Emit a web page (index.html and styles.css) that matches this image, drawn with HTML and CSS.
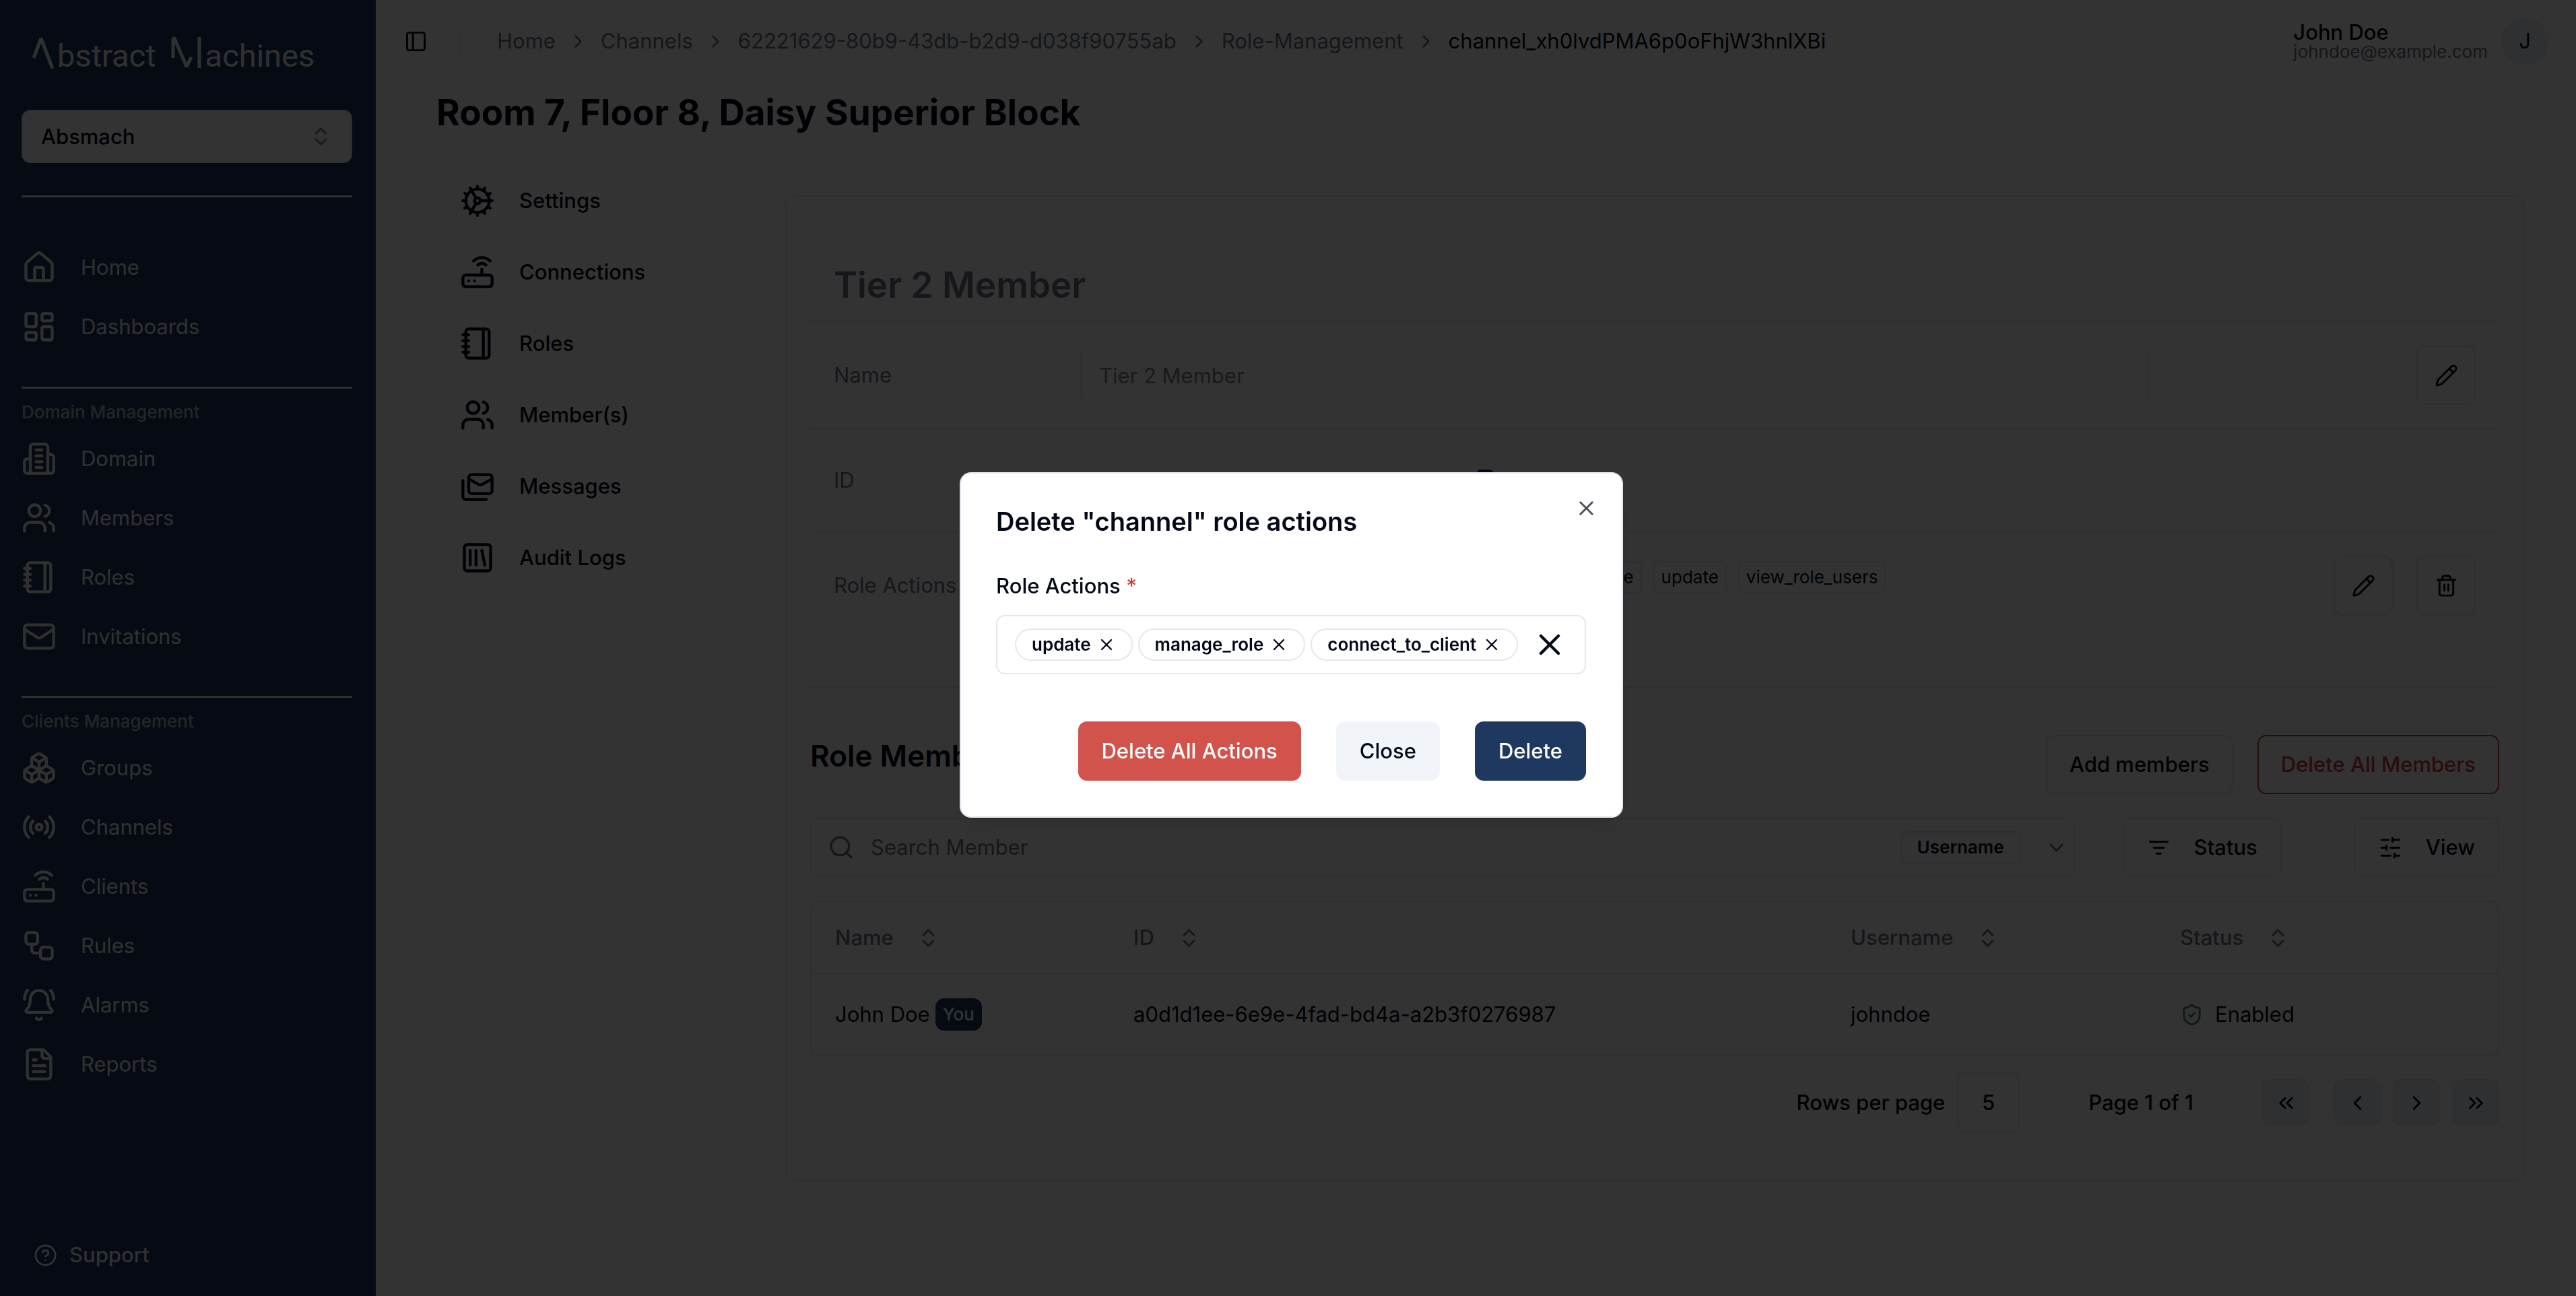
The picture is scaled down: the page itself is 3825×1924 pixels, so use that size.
FILE: index.html
```html
<!DOCTYPE html>
<html lang="en">
<head>
<meta charset="utf-8">
<title>Delete role actions</title>
<link rel="stylesheet" href="styles.css">
</head>
<body>
<svg width="0" height="0" class="sprite" aria-hidden="true">
  <symbol id="i-house" viewBox="0 0 24 24"><path d="M15 21v-8a1 1 0 0 0-1-1h-4a1 1 0 0 0-1 1v8"/><path d="M3 10a2 2 0 0 1 .709-1.528l7-5.999a2 2 0 0 1 2.582 0l7 5.999A2 2 0 0 1 21 10v9a2 2 0 0 1-2 2H5a2 2 0 0 1-2-2z"/></symbol>
  <symbol id="i-dash" viewBox="0 0 24 24"><rect width="7" height="9" x="3" y="3" rx="1"/><rect width="7" height="5" x="14" y="3" rx="1"/><rect width="7" height="9" x="14" y="12" rx="1"/><rect width="7" height="5" x="3" y="16" rx="1"/></symbol>
  <symbol id="i-building" viewBox="0 0 24 24"><path d="M6 22V4a2 2 0 0 1 2-2h8a2 2 0 0 1 2 2v18Z"/><path d="M6 12H4a2 2 0 0 0-2 2v6a2 2 0 0 0 2 2h2"/><path d="M18 9h2a2 2 0 0 1 2 2v9a2 2 0 0 1-2 2h-2"/><path d="M10 6h4"/><path d="M10 10h4"/><path d="M10 14h4"/><path d="M10 18h4"/></symbol>
  <symbol id="i-users" viewBox="0 0 24 24"><path d="M16 21v-2a4 4 0 0 0-4-4H6a4 4 0 0 0-4 4v2"/><circle cx="9" cy="7" r="4"/><path d="M22 21v-2a4 4 0 0 0-3-3.87"/><path d="M16 3.13a4 4 0 0 1 0 7.75"/></symbol>
  <symbol id="i-notebook" viewBox="0 0 24 24"><path d="M2 6h4"/><path d="M2 10h4"/><path d="M2 14h4"/><path d="M2 18h4"/><rect width="16" height="20" x="4" y="2" rx="2"/><path d="M16 2v20"/></symbol>
  <symbol id="i-mail" viewBox="0 0 24 24"><rect width="20" height="16" x="2" y="4" rx="2"/><path d="m22 7-8.97 5.7a1.94 1.94 0 0 1-2.06 0L2 7"/></symbol>
  <symbol id="i-boxes" viewBox="0 0 24 24"><path d="M2.97 12.92A2 2 0 0 0 2 14.63v3.24a2 2 0 0 0 .97 1.71l3 1.8a2 2 0 0 0 2.06 0L12 19v-5.5l-5-3-4.03 2.42Z"/><path d="m7 16.5-4.74-2.85"/><path d="m7 16.5 5-3"/><path d="M7 16.5v5.17"/><path d="M12 13.5V19l3.97 2.38a2 2 0 0 0 2.06 0l3-1.8a2 2 0 0 0 .97-1.71v-3.24a2 2 0 0 0-.97-1.71L17 10.5l-5 3Z"/><path d="m17 16.5-5-3"/><path d="m17 16.5 4.74-2.85"/><path d="M17 16.5v5.17"/><path d="M7.97 4.42A2 2 0 0 0 7 6.13v4.37l5 3 5-3V6.13a2 2 0 0 0-.97-1.71l-3-1.8a2 2 0 0 0-2.06 0l-3 1.8Z"/><path d="M12 8 7.26 5.15"/><path d="m12 8 4.74-2.85"/><path d="M12 13.5V8"/></symbol>
  <symbol id="i-radio" viewBox="0 0 24 24"><path d="M4.9 19.1C1 15.2 1 8.8 4.9 4.9"/><path d="M7.8 16.2c-2.3-2.3-2.3-6.1 0-8.5"/><circle cx="12" cy="12" r="2"/><path d="M16.2 7.8c2.3 2.3 2.3 6.1 0 8.5"/><path d="M19.1 4.9C23 8.8 23 15.1 19.1 19"/></symbol>
  <symbol id="i-router" viewBox="0 0 24 24"><rect width="20" height="8" x="2" y="14" rx="2"/><path d="M6.01 18H6"/><path d="M10.01 18H10"/><path d="M15 10v4"/><path d="M17.84 7.17a4 4 0 0 0-5.66 0"/><path d="M20.66 4.34a8 8 0 0 0-11.31 0"/></symbol>
  <symbol id="i-workflow" viewBox="0 0 24 24"><rect width="8" height="8" x="3" y="3" rx="2"/><path d="M7 11v4a2 2 0 0 0 2 2h4"/><rect width="8" height="8" x="13" y="13" rx="2"/></symbol>
  <symbol id="i-bell" viewBox="0 0 24 24"><path d="M10.268 21a2 2 0 0 0 3.464 0"/><path d="M22 8c0-2.3-.8-4.3-2-6"/><path d="M3.262 15.326A1 1 0 0 0 4 17h16a1 1 0 0 0 .74-1.673C19.41 13.956 18 12.499 18 8A6 6 0 0 0 6 8c0 4.499-1.411 5.956-2.738 7.326"/><path d="M4 2C2.8 3.7 2 5.7 2 8"/></symbol>
  <symbol id="i-file" viewBox="0 0 24 24"><path d="M15 2H6a2 2 0 0 0-2 2v16a2 2 0 0 0 2 2h12a2 2 0 0 0 2-2V7Z"/><path d="M14 2v4a2 2 0 0 0 2 2h4"/><path d="M10 9H8"/><path d="M16 13H8"/><path d="M16 17H8"/></symbol>
  <symbol id="i-help" viewBox="0 0 24 24"><circle cx="12" cy="12" r="10"/><path d="M9.09 9a3 3 0 0 1 5.83 1c0 2-3 3-3 3"/><path d="M12 17h.01"/></symbol>
  <symbol id="i-updown" viewBox="0 0 24 24"><path d="m7 15 5 5 5-5"/><path d="m7 9 5-5 5 5"/></symbol>
  <symbol id="i-panel" viewBox="0 0 24 24"><rect width="18" height="18" x="3" y="3" rx="2"/><path d="M9 3v18"/></symbol>
  <symbol id="i-right" viewBox="0 0 24 24"><path d="m9 18 6-6-6-6"/></symbol>
  <symbol id="i-left" viewBox="0 0 24 24"><path d="m15 18-6-6 6-6"/></symbol>
  <symbol id="i-down" viewBox="0 0 24 24"><path d="m6 9 6 6 6-6"/></symbol>
  <symbol id="i-first" viewBox="0 0 24 24"><path d="m11 17-5-5 5-5"/><path d="m18 17-5-5 5-5"/></symbol>
  <symbol id="i-last" viewBox="0 0 24 24"><path d="m6 17 5-5-5-5"/><path d="m13 17 5-5-5-5"/></symbol>
  <symbol id="i-cog" viewBox="0 0 24 24"><path d="M12 20a8 8 0 1 0 0-16 8 8 0 0 0 0 16Z"/><path d="M12 14a2 2 0 1 0 0-4 2 2 0 0 0 0 4Z"/><path d="M12 2v2"/><path d="M12 22v-2"/><path d="m17 20.66-1-1.73"/><path d="M11 10.27 7 3.34"/><path d="m20.66 17-1.73-1"/><path d="m3.34 7 1.73 1"/><path d="M14 12h8"/><path d="M2 12h2"/><path d="m20.66 7-1.73 1"/><path d="m3.34 17 1.73-1"/><path d="m17 3.34-1 1.73"/><path d="m11 13.73-4 6.93"/></symbol>
  <symbol id="i-mails" viewBox="0 0 24 24"><rect width="16" height="13" x="6" y="4" rx="2"/><path d="m22 7-7.1 3.78c-.57.3-1.23.3-1.8 0L6 7"/><path d="M2 8v11c0 1.1.9 2 2 2h14"/></symbol>
  <symbol id="i-library" viewBox="0 0 24 24"><rect width="18" height="18" x="3" y="3" rx="2"/><path d="M7 7v10"/><path d="M11 7v10"/><path d="m15 7 2 10"/></symbol>
  <symbol id="i-pencil" viewBox="0 0 24 24"><path d="M21.174 6.812a1 1 0 0 0-3.986-3.987L3.842 16.174a2 2 0 0 0-.5.83l-1.321 4.352a.5.5 0 0 0 .623.622l4.353-1.32a2 2 0 0 0 .83-.497z"/><path d="m15 5 4 4"/></symbol>
  <symbol id="i-trash" viewBox="0 0 24 24"><path d="M3 6h18"/><path d="M19 6v14c0 1-1 2-2 2H7c-1 0-2-1-2-2V6"/><path d="M8 6V4c0-1 1-2 2-2h4c1 0 2 1 2 2v2"/><path d="M10 11v6"/><path d="M14 11v6"/></symbol>
  <symbol id="i-copy" viewBox="0 0 24 24"><rect width="14" height="14" x="8" y="8" rx="2"/><path d="M4 16c-1.100 0-2-.9-2-2V4c0-1.100.9-2 2-2h10c1.100 0 2 .9 2 2"/></symbol>
  <symbol id="i-search" viewBox="0 0 24 24"><circle cx="11" cy="11" r="8"/><path d="m21 21-4.300-4.300"/></symbol>
  <symbol id="i-filter" viewBox="0 0 24 24"><path d="M3 6h18"/><path d="M7 12h10"/><path d="M10 18h4"/></symbol>
  <symbol id="i-sliders" viewBox="0 0 24 24"><path d="M21 4h-7"/><path d="M10 4H3"/><path d="M21 12h-9"/><path d="M8 12H3"/><path d="M21 20h-5"/><path d="M12 20H3"/><path d="M14 2v4"/><path d="M8 10v4"/><path d="M16 18v4"/></symbol>
  <symbol id="i-shield" viewBox="0 0 24 24"><path d="M20 13c0 5-3.500 7.500-7.660 8.950a1 1 0 0 1-.67-.01C7.500 20.500 4 18 4 13V6a1 1 0 0 1 1-1c2 0 4.500-1.200 6.240-2.720a1.170 1.170 0 0 1 1.520 0C14.510 3.810 17 5 19 5a1 1 0 0 1 1 1z"/><path d="m9 12 2 2 4-4"/></symbol>
  <symbol id="i-x" viewBox="0 0 24 24"><path d="M18 6 6 18"/><path d="m6 6 12 12"/></symbol>
</svg>

<div class="app">
  <aside class="sidebar">
    <div class="logo" role="img" aria-label="Abstract Machines">
      <svg class="mark-a" viewBox="0 0 34 48"><path d="M3 32 14 3 31 48"/></svg>
      <span class="logo-text">bstract</span>
      <svg class="mark-m" viewBox="0 0 48 48"><path d="M4 32V3H6L24 45 31 31M43 1V47"/></svg>
      <span class="logo-text">achines</span>
    </div>
    <button class="domain-select" type="button">Absmach <svg class="icon sm muted"><use href="#i-updown"/></svg></button>
    <nav class="menu first">
      <a href="#"><svg class="icon lg"><use href="#i-house"/></svg>Home</a>
      <a href="#"><svg class="icon lg"><use href="#i-dash"/></svg>Dashboards</a>
    </nav>
    <nav class="menu">
      <h2>Domain Management</h2>
      <a href="#"><svg class="icon lg"><use href="#i-building"/></svg>Domain</a>
      <a href="#"><svg class="icon lg"><use href="#i-users"/></svg>Members</a>
      <a href="#"><svg class="icon lg"><use href="#i-notebook"/></svg>Roles</a>
      <a href="#"><svg class="icon lg"><use href="#i-mail"/></svg>Invitations</a>
    </nav>
    <nav class="menu">
      <h2>Clients Management</h2>
      <a href="#"><svg class="icon lg"><use href="#i-boxes"/></svg>Groups</a>
      <a href="#"><svg class="icon lg"><use href="#i-radio"/></svg>Channels</a>
      <a href="#"><svg class="icon lg"><use href="#i-router"/></svg>Clients</a>
      <a href="#"><svg class="icon lg"><use href="#i-workflow"/></svg>Rules</a>
      <a href="#"><svg class="icon lg"><use href="#i-bell"/></svg>Alarms</a>
      <a href="#"><svg class="icon lg"><use href="#i-file"/></svg>Reports</a>
    </nav>
    <a class="support" href="#"><svg class="icon sm"><use href="#i-help"/></svg>Support</a>
  </aside>

  <div class="page">
    <header class="topbar">
      <button class="plain" type="button" aria-label="Toggle sidebar"><svg class="icon sm"><use href="#i-panel"/></svg></button>
      <span class="divider"></span>
      <nav class="crumbs">
        <a href="#">Home</a><svg class="icon xs"><use href="#i-right"/></svg>
        <a href="#">Channels</a><svg class="icon xs"><use href="#i-right"/></svg>
        <a href="#">62221629-80b9-43db-b2d9-d038f90755ab</a><svg class="icon xs"><use href="#i-right"/></svg>
        <a href="#">Role-Management</a><svg class="icon xs"><use href="#i-right"/></svg>
        <span class="current">channel_xh0lvdPMA6p0oFhjW3hnlXBi</span>
      </nav>
      <div class="user">
        <div><div class="user-name">John Doe</div><div class="user-mail">johndoe@example.com</div></div>
        <span class="avatar">J</span>
      </div>
    </header>

    <h1>Room 7, Floor 8, Daisy Superior Block</h1>

    <div class="columns">
      <nav class="subnav">
        <a href="#"><svg class="icon lg"><use href="#i-cog"/></svg>Settings</a>
        <a href="#"><svg class="icon lg"><use href="#i-router"/></svg>Connections</a>
        <a href="#"><svg class="icon lg"><use href="#i-notebook"/></svg>Roles</a>
        <a href="#"><svg class="icon lg"><use href="#i-users"/></svg>Member(s)</a>
        <a href="#"><svg class="icon lg"><use href="#i-mails"/></svg>Messages</a>
        <a href="#"><svg class="icon lg"><use href="#i-library"/></svg>Audit Logs</a>
      </nav>

      <main class="card">
        <h2 class="card-title">Tier 2 Member</h2>
        <div class="field">
          <label for="role-name">Name</label>
          <input id="role-name" class="name-input" type="text" value="Tier 2 Member" disabled>
          <div class="actions"><button class="square" type="button" aria-label="Edit name"><svg class="icon sm"><use href="#i-pencil"/></svg></button></div>
        </div>
        <div class="field id">
          <span class="label">ID</span>
          <div class="id-value"><span>channel_xh0lvdPMA6p0oFhjW3hnlXBi</span><button class="plain" type="button" aria-label="Copy ID"><svg class="icon sm"><use href="#i-copy"/></svg></button></div>
        </div>
        <div class="field roles">
          <span class="label">Role Actions</span>
          <div class="chips">
            <span>connect_to_client</span><span>share</span><span>manage_role</span><span>read</span><span>remove_role</span><span>update</span><span>view_role_users</span>
          </div>
          <div class="actions">
            <button class="square" type="button" aria-label="Edit actions"><svg class="icon sm"><use href="#i-pencil"/></svg></button>
            <button class="square" type="button" aria-label="Delete actions"><svg class="icon sm"><use href="#i-trash"/></svg></button>
          </div>
        </div>

        <div class="members-head">
          <h3>Role Members</h3>
          <button class="btn outline" type="button">Add members</button>
          <button class="btn outline danger" type="button">Delete All Members</button>
        </div>

        <div class="toolbar">
          <div class="search">
            <svg class="icon md"><use href="#i-search"/></svg>
            <input type="text" placeholder="Search Member" aria-label="Search Member">
            <span class="by">Username</span>
            <svg class="icon sm"><use href="#i-down"/></svg>
          </div>
          <button class="btn outline tool status" type="button"><svg class="icon sm"><use href="#i-filter"/></svg>Status</button>
          <button class="btn outline tool" type="button"><svg class="icon sm"><use href="#i-sliders"/></svg>View</button>
        </div>

        <div class="table-wrap">
          <table>
            <colgroup><col class="c-name"><col class="c-id"><col class="c-user"><col></colgroup>
            <thead><tr>
              <th><span>Name<svg class="icon sm"><use href="#i-updown"/></svg></span></th>
              <th><span>ID<svg class="icon sm"><use href="#i-updown"/></svg></span></th>
              <th><span>Username<svg class="icon sm"><use href="#i-updown"/></svg></span></th>
              <th><span>Status<svg class="icon sm"><use href="#i-updown"/></svg></span></th>
            </tr></thead>
            <tbody><tr>
              <td><div class="cell">John Doe<b class="you">You</b></div></td>
              <td>a0d1d1ee-6e9e-4fad-bd4a-a2b3f0276987</td>
              <td>johndoe</td>
              <td><div class="cell state"><svg class="icon sm green"><use href="#i-shield"/></svg>Enabled</div></td>
            </tr></tbody>
          </table>
        </div>

        <div class="pager">
          <span>Rows per page</span>
          <button class="rows" type="button">5</button>
          <span class="pages">Page 1 of 1</span>
          <button class="pg first" type="button" aria-label="First page"><svg class="icon sm"><use href="#i-first"/></svg></button>
          <button class="pg" type="button" aria-label="Previous page"><svg class="icon sm"><use href="#i-left"/></svg></button>
          <button class="pg" type="button" aria-label="Next page"><svg class="icon sm"><use href="#i-right"/></svg></button>
          <button class="pg" type="button" aria-label="Last page"><svg class="icon sm"><use href="#i-last"/></svg></button>
        </div>
      </main>
    </div>
  </div>
</div>

<div class="overlay">
  <section class="dialog" role="dialog" aria-modal="true" aria-labelledby="dlg-title">
    <button class="plain close" type="button" aria-label="Close dialog"><svg class="icon sm"><use href="#i-x"/></svg></button>
    <h2 id="dlg-title">Delete "channel" role actions</h2>
    <div class="dlg-label" id="dlg-label">Role Actions <span class="req">*</span></div>
    <div class="multi" role="group" aria-labelledby="dlg-label">
      <span class="pill">update<button class="plain" type="button" aria-label="Remove update"><svg class="icon mini"><use href="#i-x"/></svg></button></span>
      <span class="pill">manage_role<button class="plain" type="button" aria-label="Remove manage_role"><svg class="icon mini"><use href="#i-x"/></svg></button></span>
      <span class="pill">connect_to_client<button class="plain" type="button" aria-label="Remove connect_to_client"><svg class="icon mini"><use href="#i-x"/></svg></button></span>
      <button class="plain clear" type="button" aria-label="Clear all"><svg class="icon lg"><use href="#i-x"/></svg></button>
    </div>
    <footer>
      <button class="btn red" type="button">Delete All Actions</button>
      <button class="btn soft" type="button">Close</button>
      <button class="btn navy" type="button">Delete</button>
    </footer>
  </section>
</div>
</body>
</html>
```
FILE: styles.css
```css
:root {
  --navy: #1e3760;
  --ink: #020817;
  --muted: #6a7286;
  --line: #e2e8f0;
  --red: #cc3f37;
}
* { box-sizing: border-box; }
body {
  margin: 0;
  font-family: Inter, "Liberation Sans", sans-serif;
  font-size: 31px;
  line-height: 44px;
  color: var(--ink);
  background: #fff;
}
button, input { font: inherit; color: inherit; }
button { cursor: pointer; }
a { color: inherit; text-decoration: none; }
h1, h2, h3 { margin: 0; }
.sprite { position: absolute; }
.icon { flex: none; display: block; fill: none; stroke: currentColor; stroke-width: 2; stroke-linecap: round; stroke-linejoin: round; }
.icon.lg { width: 52px; height: 52px; }
.icon.md { width: 40px; height: 40px; }
.icon.sm { width: 35px; height: 35px; }
.icon.xs { width: 31px; height: 31px; }
.icon.mini { width: 28px; height: 28px; }
.plain { border: 0; background: none; padding: 0; }

.app { display: flex; min-height: 100vh; }

/* Sidebar */
.sidebar { flex: none; width: 558px; padding: 54px 35px 39px 32px; background: var(--navy); color: #f1efec; display: flex; flex-direction: column; }
.logo { display: flex; height: 48px; padding-left: 15px; margin-bottom: 61px; }
.logo svg { height: 48px; fill: none; stroke: currentColor; stroke-width: 5; stroke-linejoin: bevel; }
.mark-a { width: 34px; }
.mark-m { width: 48px; margin-left: 21px; }
.logo-text { font-family: Roboto, sans-serif; font-size: 47px; font-weight: 400; line-height: 58px; margin-left: 4px; }
.domain-select { display: flex; align-items: center; justify-content: space-between; height: 79px; padding: 0 27px; margin-bottom: 48px; border: 2px solid var(--line); border-radius: 13px; background: #fff; color: var(--ink); text-align: left; font-weight: 500; }
.muted { opacity: .5; }
.menu { border-top: 3px solid #f1efec; padding-top: 17px; margin-bottom: 44px; }
.menu.first { padding-top: 60px; margin-bottom: 45px; }
.menu h2 { font-size: 26px; font-weight: 500; line-height: 35px; opacity: .7; margin-bottom: 8px; }
.menu a { display: flex; align-items: center; gap: 36px; height: 88px; }
.support { display: flex; align-items: center; gap: 18px; padding-left: 18px; margin-top: auto; font-weight: 500; }

/* Page */
.page { flex: 1; min-width: 0; }
.topbar { display: flex; align-items: center; height: 122px; padding: 0 41px 0 42px; }
.divider { width: 2px; height: 35px; margin: 0 54px 0 47px; background: var(--line); }
.crumbs { display: flex; align-items: center; gap: 18px; color: var(--muted); }
.crumbs .current { color: var(--ink); }
.user { display: flex; align-items: center; gap: 20px; margin-left: auto; }
.user-name { font-weight: 500; line-height: 32px; }
.user-mail { font-size: 26px; line-height: 26px; color: var(--muted); }
.avatar { width: 70px; height: 70px; border-radius: 50%; background: #e9eff6; display: grid; place-items: center; }
h1 { margin: 14px 0 0 90px; font-size: 53px; font-weight: 700; line-height: 62px; }
.columns { display: flex; padding: 45px 77px 40px 125px; }
.subnav { flex: none; width: 483px; margin-top: 2px; }
.subnav a { display: flex; align-items: center; gap: 36px; height: 106px; font-weight: 500; }
.card { flex: 1; min-width: 0; margin-top: 47px; border: 2px solid var(--line); border-radius: 17px; padding: 95px 35px 71px; }
.card-title { padding: 0 35px 17px; font-size: 53px; font-weight: 600; line-height: 72px; color: var(--muted); }

.field { display: grid; grid-template-columns: 366px 1586px 1fr; align-items: center; min-height: 160px; padding: 0 35px; border-top: 2px solid var(--line); }
.field label, .field .label { color: var(--muted); }
.name-input { height: 88px; border: 2px solid var(--line); border-radius: 13px; padding: 0 26px; background: #fff; opacity: .5; }
.actions { display: flex; justify-content: flex-end; gap: 35px; }
.square { width: 88px; height: 88px; display: grid; place-items: center; border: 2px solid var(--line); border-radius: 13px; background: #fff; padding: 0; }
.field.id { min-height: 152px; }
.id-value { display: flex; align-items: center; padding-left: 26px; }
.id-value span { width: 562px; font-size: 26px; }
.field.roles { min-height: 231px; align-items: start; padding-top: 35px; }
.roles .label { line-height: 88px; }
.chips { display: flex; flex-wrap: wrap; gap: 17px; padding-top: 8px; }
.chips span { font-size: 26px; line-height: 44px; border: 2px solid var(--line); border-radius: 9px; padding: 0 10px; }

.members-head { display: flex; align-items: center; gap: 36px; border-top: 2px solid var(--line); padding-top: 70px; }
.members-head h3 { margin-right: auto; font-size: 44px; font-weight: 600; line-height: 62px; margin-bottom: 26px; }
.btn { height: 88px; padding: 0 35px; border: 0; border-radius: 13px; font-weight: 500; white-space: nowrap; }
.btn.outline { background: #fff; border: 2px solid var(--line); padding: 0 33px; }
.btn.outline.danger { color: var(--red); border-color: var(--red); }

.toolbar { display: flex; margin-top: 35px; }
.search { flex: 1; display: flex; align-items: center; height: 88px; border: 2px solid var(--line); border-radius: 13px; padding: 0 8px 0 24px; margin-right: 71px; color: var(--muted); }
.search input { flex: 1; min-width: 0; border: 0; outline: 0; background: none; margin-left: 24px; padding: 0; }
.search input::placeholder { color: var(--muted); opacity: 1; }
.by { color: var(--ink); font-size: 26px; font-weight: 600; line-height: 44px; border: 2px solid var(--line); border-radius: 9px; padding: 0 23px; margin-right: 35px; }
.btn.tool { display: flex; align-items: center; gap: 35px; padding: 0 34px; }
.status { margin-right: 108px; }

.table-wrap { margin-top: 35px; border: 2px solid var(--line); border-radius: 13px; }
table { width: 100%; table-layout: fixed; border-collapse: collapse; }
.c-name { width: 443px; }
.c-id { width: 1065px; }
.c-user { width: 489px; }
th, td { text-align: left; padding: 0 35px; font-weight: 400; }
th { height: 107px; color: var(--muted); font-weight: 500; border-bottom: 2px solid var(--line); }
th span { display: flex; align-items: center; gap: 34px; }
td { height: 119px; }
.cell { display: flex; align-items: center; gap: 8px; }
.cell.state { gap: 17px; }
.you { font-size: 26px; font-weight: 500; line-height: 48px; background: var(--navy); color: #fff; border-radius: 13px; padding: 0 11px; }
.green { color: #3f8f74; }

.pager { display: flex; align-items: center; justify-content: flex-end; gap: 18px; margin-top: 26px; font-weight: 500; }
.rows { width: 93px; height: 88px; border: 2px solid var(--line); border-radius: 13px; background: #fff; }
.pages { margin: 0 84px; }
.pg { width: 70px; height: 70px; display: grid; place-items: center; border: 2px solid var(--line); border-radius: 13px; background: #e9eff6; padding: 0; }
.pg.first { margin-right: 18px; }

/* Dialog */
.overlay { position: fixed; inset: 0; display: grid; place-items: center; padding: 0 0 9px 10px; background: rgba(0, 0, 0, .8); }
.dialog { position: relative; width: 985px; background: #fff; border: 2px solid var(--line); border-radius: 17px; padding: 51px 53px 53px 52px; box-shadow: 0 22px 33px -7px rgba(0, 0, 0, .1), 0 9px 13px -9px rgba(0, 0, 0, .1); }
.dialog h2 { font-size: 38px; font-weight: 600; line-height: 40px; }
.close { position: absolute; top: 34px; right: 35px; opacity: .7; }
.dlg-label { margin-top: 54px; font-weight: 500; }
.req { color: var(--red); }
.multi { display: flex; align-items: center; gap: 8px; height: 88px; margin-top: 21px; border: 2px solid var(--line); border-radius: 13px; padding: 0 26px; }
.pill { display: flex; align-items: center; gap: 9px; font-size: 26px; font-weight: 600; line-height: 44px; border: 2px solid var(--line); border-radius: 24px; padding: 0 23px; white-space: nowrap; }
.clear { margin-left: auto; }
footer { display: flex; justify-content: flex-end; gap: 52px; margin-top: 70px; }
.red { background: #d1534b; color: #fff; }
.soft { background: #f1f5fa; }
.navy { background: #1f3860; color: #fff; }
```
